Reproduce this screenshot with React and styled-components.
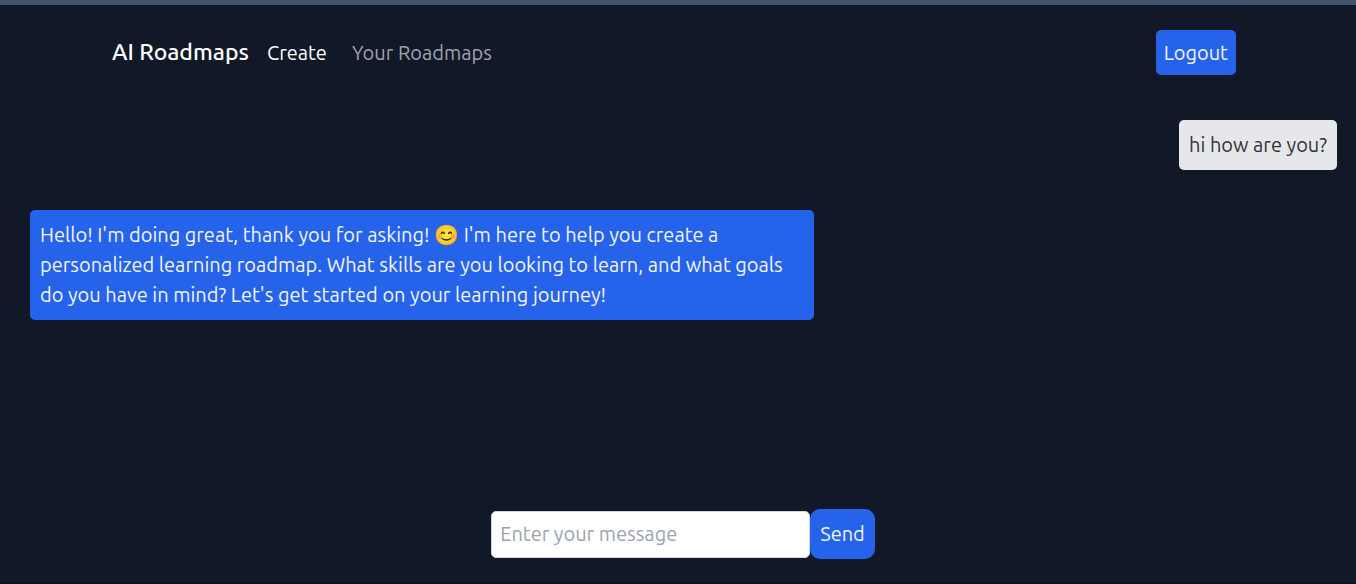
import React from "react";
import styled, { createGlobalStyle } from "styled-components";

const GlobalStyle = createGlobalStyle`
  *, *::before, *::after { box-sizing: border-box; }
  body {
    margin: 0;
    background: #111827;
    color: #fff;
    font-family: Ubuntu, "Noto Sans", sans-serif;
    font-size: 20px;
    line-height: 30px;
  }
  button, input { font: inherit; }
`;

const Page = styled.div`
  display: flex;
  flex-direction: column;
  min-height: 100vh;
  border-top: 5px solid #42526b;
  border-bottom: 1px solid #0b101c;
`;

const Header = styled.header`
  display: flex;
  align-items: center;
  justify-content: space-between;
  padding: 25px 120px 25px 112px;
`;

const Nav = styled.nav`
  display: flex;
  align-items: baseline;
`;

const Brand = styled.a`
  color: #fff;
  font-size: 23px;
  font-weight: 500;
  text-decoration: none;
  margin-right: 18px;
`;

const NavLink = styled.a`
  color: ${(p) => (p.$active ? "#fff" : "#9ca3af")};
  text-decoration: none;
  margin-right: 25px;
`;

const Button = styled.button`
  border: 0;
  background: #2563eb;
  color: #f3f4f6;
  white-space: nowrap;
  cursor: pointer;
  padding: ${(p) => (p.$large ? "10px" : "8px 8px 7px")};
  border-radius: ${(p) => (p.$large ? "10px" : "5px")};
`;

const Messages = styled.main`
  flex: 1;
  display: flex;
  flex-direction: column;
  gap: 40px;
  padding: 20px 19px 20px 30px;
`;

const Bubble = styled.p`
  margin: 0;
  padding: 10px;
  border-radius: 5px;
  max-width: 60%;
  align-self: ${(p) => (p.$own ? "flex-end" : "flex-start")};
  background: ${(p) => (p.$own ? "#e5e7eb" : "#2563eb")};
  color: ${(p) => (p.$own ? "#333" : "#f3f4f6")};
`;

const Composer = styled.form`
  display: flex;
  align-items: center;
  justify-content: center;
  padding: 0 0 24px 10px;
`;

const MessageInput = styled.input`
  width: 319px;
  height: 47px;
  padding: 0 8px 1px;
  border: 1px solid #d1d5db;
  border-radius: 5px;
  background: #fff;
  color: #111827;
  &::placeholder { color: #9ca3af; opacity: 1; }
`;

export default function App() {
  return (
    <>
      <GlobalStyle />
      <Page>
        <Header>
          <Nav>
            <Brand href="#home">AI Roadmaps</Brand>
            <NavLink href="#create" $active>Create</NavLink>
            <NavLink href="#roadmaps">Your Roadmaps</NavLink>
          </Nav>
          <Button type="button">Logout</Button>
        </Header>
        <Messages>
          <Bubble $own>hi how are you?</Bubble>
          <Bubble>
            Hello! I'm doing great, thank you for asking! 😊 I'm here to help you
            create a personalized learning roadmap. What skills are you looking to
            learn, and what goals do you have in mind? Let's get started on your
            learning journey!
          </Bubble>
        </Messages>
        <Composer onSubmit={(e) => e.preventDefault()}>
          <MessageInput aria-label="Message" placeholder="Enter your message" />
          <Button type="submit" $large>Send</Button>
        </Composer>
      </Page>
    </>
  );
}
